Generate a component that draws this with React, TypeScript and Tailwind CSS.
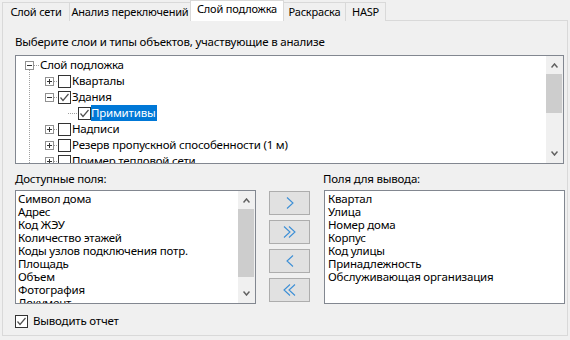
import React from "react";

const font = "font-['Noto_Sans',sans-serif] text-[11.5px] tracking-[-0.2px]";

function Check({ checked }: { checked?: boolean }) {
  return (
    <span className="flex h-[13px] w-[13px] shrink-0 items-center justify-center border border-[#333] bg-white">
      {checked && (
        <svg width="11" height="11" viewBox="0 0 11 11">
          <polyline points="1.5,5.5 4,8.5 9.5,2" fill="none" stroke="#505050" strokeWidth="1.2" />
        </svg>
      )}
    </span>
  );
}

function Expander({ open }: { open?: boolean }) {
  return (
    <span className="relative flex h-[9px] w-[9px] shrink-0 items-center justify-center border border-[#919191] bg-white">
      <svg width="7" height="7" viewBox="0 0 7 7">
        <line x1="1" y1="3.5" x2="6" y2="3.5" stroke="#333" strokeWidth="1" />
        {!open && <line x1="3.5" y1="1" x2="3.5" y2="6" stroke="#333" strokeWidth="1" />}
      </svg>
    </span>
  );
}

function Dots({ w }: { w: number }) {
  return (
    <svg width={w} height="1" className="shrink-0">
      <line x1="0" y1="0.5" x2={w} y2="0.5" stroke="#a0a0a0" strokeDasharray="1 1" />
    </svg>
  );
}

function Chevron({ dir }: { dir: "up" | "down" }) {
  return (
    <svg width="7" height="5" viewBox="0 0 7 5">
      <polyline
        points={dir === "up" ? "0.5,4.5 3.5,1 6.5,4.5" : "0.5,0.5 3.5,4 6.5,0.5"}
        fill="none"
        stroke="#606060"
        strokeWidth="1.5"
      />
    </svg>
  );
}

function ScrollBar({ thumbTop, thumbH }: { thumbTop: number; thumbH: number }) {
  return (
    <div className="relative flex h-full w-[17px] shrink-0 flex-col items-center justify-between bg-[#f0f0f0] py-[7px]">
      <Chevron dir="up" />
      <div className="absolute left-0 right-[1px] bg-[#cdcdcd]" style={{ top: thumbTop, height: thumbH }} />
      <Chevron dir="down" />
    </div>
  );
}

type Node = {
  pad: number;
  exp?: "open" | "closed";
  checked?: boolean;
  label: string;
  selected?: boolean;
  root?: boolean;
};

const tree: Node[] = [
  { pad: 9, exp: "open", label: "Слой подложка", root: true },
  { pad: 29, exp: "closed", label: "Кварталы" },
  { pad: 29, exp: "open", checked: true, label: "Здания" },
  { pad: 52, checked: true, label: "Примитивы", selected: true },
  { pad: 29, exp: "closed", label: "Надписи" },
  { pad: 29, exp: "closed", label: "Резерв пропускной способенности (1 м)" },
  { pad: 29, exp: "closed", label: "Пример тепловой сети" },
];

function TreeRow({ n }: { n: Node }) {
  return (
    <div className="flex h-[16px] shrink-0 items-center whitespace-nowrap" style={{ paddingLeft: n.pad }}>
      {n.exp && <Expander open={n.exp === "open"} />}
      {n.root ? (
        <Dots w={6} />
      ) : n.exp ? (
        <>
          <Dots w={4} />
          <Check checked={n.checked} />
        </>
      ) : (
        <>
          <Dots w={10} />
          <Check checked={n.checked} />
        </>
      )}
      <span
        className={
          "h-[16px] pr-[2px] leading-[16px] " +
          (n.selected ? "bg-[#0078d7] text-white" : n.root ? "" : "pl-[1px]")
        }
      >
        {n.label}
      </span>
    </div>
  );
}

function ArrowButton({ kind }: { kind: "r" | "rr" | "l" | "ll" }) {
  const one = (x: number, right: boolean) =>
    right ? `${x},0.5 ${x + 6},6 ${x},11.5` : `${x + 6},0.5 ${x},6 ${x + 6},11.5`;
  const double = kind === "rr" || kind === "ll";
  const right = kind === "r" || kind === "rr";
  return (
    <button className="flex h-[24px] w-[41px] items-center justify-center border border-[#adadad] bg-[#e1e1e1]">
      <svg width={double ? 13 : 8} height="12" viewBox={double ? "0 0 13 12" : "0 0 8 12"}>
        <polyline points={one(1, right)} fill="none" stroke="#3c8fd6" strokeWidth="1.1" />
        {double && <polyline points={one(6, right)} fill="none" stroke="#3c8fd6" strokeWidth="1.1" />}
      </svg>
    </button>
  );
}

const available = [
  "Символ дома",
  "Адрес",
  "Код ЖЭУ",
  "Количество этажей",
  "Коды узлов подключения потр.",
  "Площадь",
  "Объем",
  "Фотография",
  "Документ",
];

const output = [
  "Квартал",
  "Улица",
  "Номер дома",
  "Корпус",
  "Код улицы",
  "Принадлежность",
  "Обслуживающая организация",
];

const tabs = [
  { label: "Слой сети", w: 67 },
  { label: "Анализ переключений", w: 121 },
  { label: "Слой подложка", w: 93, active: true },
  { label: "Раскраска", w: 62 },
  { label: "HASP", w: 40 },
];

export default function App() {
  return (
    <div className={`h-[340px] w-[570px] overflow-hidden bg-[#f0f0f0] text-black ${font}`}>
      {/* tabs */}
      <div className="relative z-10 flex h-[21px] items-end pl-[2px] text-[11px]">
        {tabs.map((t) => (
          <div
            key={t.label}
            className={
              "-mr-[1px] flex items-center justify-center whitespace-nowrap border border-b-0 border-[#d9d9d9] " +
              (t.active ? "h-[21px] bg-white pb-[3px]" : "h-[19px] bg-[#f0f0f0]")
            }
            style={{ width: t.w + 1 }}
          >
            {t.label}
          </div>
        ))}
      </div>

      {/* panel */}
      <div className="-mt-[1px] ml-[2px] flex h-[316px] w-[566px] flex-col border border-[#d9d9d9] bg-[#f0f0f0] pl-[12px] pt-[13px]">
        <div className="h-[16px] leading-[16px]">Выберите слои и типы объектов, участвующие в анализе</div>

        <div className="mt-[5px] flex h-[109px] w-[549px] border border-[#828790] bg-white">
          <div className="relative flex flex-1 flex-col overflow-hidden pt-[1px]">
            <svg className="absolute left-0 top-0" width="80" height="107">
              <line x1="13.5" y1="14" x2="13.5" y2="107" stroke="#a0a0a0" strokeDasharray="1 1" />
              <line x1="52" y1="57.5" x2="62" y2="57.5" stroke="#a0a0a0" strokeDasharray="1 1" />
            </svg>
            {tree.map((n) => (
              <TreeRow key={n.label} n={n} />
            ))}
          </div>
          <ScrollBar thumbTop={18} thumbH={39} />
        </div>

        <div className="mt-[7px] flex h-[16px] w-[549px] leading-[16px]">
          <span className="w-[308px]">Доступные поля:</span>
          <span>Поля для вывода:</span>
        </div>

        <div className="mt-[3px] flex w-[550px] items-start">
          <div className="flex h-[114px] w-[241px] border border-[#828790] bg-white">
            <div className="flex flex-1 flex-col overflow-hidden pl-[2px] pt-[1px]">
              {available.map((a) => (
                <div key={a} className="h-[13px] shrink-0 whitespace-nowrap leading-[13px]">
                  {a}
                </div>
              ))}
            </div>
            <ScrollBar thumbTop={18} thumbH={68} />
          </div>

          <div className="ml-[13px] flex flex-col gap-[5px] pt-[1px]">
            <ArrowButton kind="r" />
            <ArrowButton kind="rr" />
            <ArrowButton kind="l" />
            <ArrowButton kind="ll" />
          </div>

          <div className="ml-[14px] flex h-[114px] w-[241px] flex-col border border-[#828790] bg-white pl-[3px] pt-[1px]">
            {output.map((a) => (
              <div key={a} className="h-[13px] shrink-0 whitespace-nowrap leading-[13px]">
                {a}
              </div>
            ))}
          </div>
        </div>

        <div className="mt-[9px] flex items-center gap-[5px]">
          <Check checked />
          <span className="leading-[16px]">Выводить отчет</span>
        </div>
      </div>
    </div>
  );
}
